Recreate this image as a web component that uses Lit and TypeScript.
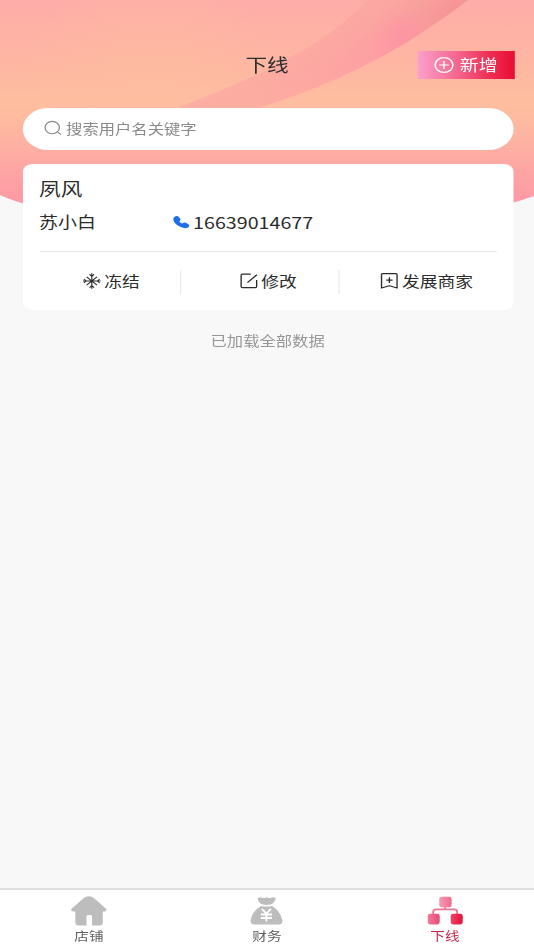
import { LitElement, html, css, svg } from "lit";
import { customElement, property } from "lit/decorators.js";

const icons: Record<string, unknown> = {
  add: svg`<circle cx="8" cy="8" r="7.4"/><path d="M8 4v8M4 8h8"/>`,
  search: svg`<circle cx="7.2" cy="7" r="6.6"/><path d="M12 11.8l3.4 2.8"/>`,
  snow: svg`<g stroke-width="1"><path d="M8 .2v15.6M.2 8h15.6M3.4 3.8l9.2 8.4M12.6 3.8l-9.2 8.4M6 1.4L8 3.4l2-2M6 14.6L8 12.6l2 2M1 6L3 8 1 10M15 6L13 8l2 2"/></g>`,
  edit: svg`<path d="M9.6 1.2H2.2Q1 1.2 1 2.4v11q0 1.2 1.2 1.2h11.4q1.2 0 1.2-1.2V7M6.6 9.6L15 1.8"/>`,
  bookmark: svg`<path d="M2 .7h11.8Q14.8 .7 14.8 1.8V15L8 12.8 1 15V1.8Q1 .7 2 .7zM8 4.2v5.8M5.2 7.1h5.6"/>`,
};

@customElement("line-icon")
class LineIcon extends LitElement {
  @property() name = "";
  static styles = css`
    :host { display: block; width: 16px; height: 16px; flex: none; }
    svg { display: block; width: 100%; height: 100%; overflow: visible; fill: none; stroke: currentColor; stroke-width: 1.2; stroke-linejoin: round; }
  `;
  render() {
    return html`<svg viewBox="0 0 16 16" preserveAspectRatio="none">${icons[this.name]}</svg>`;
  }
}

const tabs = [
  {
    label: "店铺",
    active: false,
    icon: svg`<path fill="#bdbdbd" d="M13 2Q15 .2 18 .2T23 2L35 12.4Q37 14.8 34 15.4H32V26Q32 29.4 29 29.4H21.3V20.5Q21.3 19 19.8 19H17.2Q15.7 19 15.7 20.5V29.4H7.5Q4.5 29.4 4.5 26V15.4H2Q-1 14.8 1 12.4Z"/>`,
  },
  {
    label: "财务",
    active: false,
    icon: svg`<path fill="#bdbdbd" d="M9.8 4.4Q8.4 1 12.4 1.2Q15 3 18.4 1.2Q21.4 3 24 1.2Q28.4 1 26.8 4.4Q25.4 6.6 23 8.3Q18 9.6 13.4 8.3Q11 6.8 9.8 4.4Z"/><path fill="#bdbdbd" d="M12.6 10Q18 11.2 23.6 10Q32 15 34 24.4Q34.4 28.6 30 28.6H6.4Q2 28.6 2.2 24.4Q4 15 12.6 10Z"/><path fill="none" stroke="#fff" stroke-width="1.8" d="M13.5 12.8L18 17.6L22.5 12.8M18 17.6V25.6M12.4 18.5H23.6M12.4 22H23.6"/>`,
  },
  {
    label: "下线",
    active: true,
    icon: svg`<path fill="none" stroke="#ec7391" stroke-width="1.8" d="M18 9V13.5M6 19V16Q6 13.4 9 13.4H27Q30 13.4 30 16V19"/><rect x="12" y=".7" width="12.4" height="10.6" rx="2.4" fill="url(#t)"/><rect x=".5" y="17.8" width="12" height="10.6" rx="2.4" fill="url(#l)"/><rect x="23.5" y="17.8" width="12" height="10.6" rx="2.4" fill="url(#r)"/>
      <defs><linearGradient id="t"><stop stop-color="#f59aba"/><stop offset="1" stop-color="#ef6c88"/></linearGradient><linearGradient id="l"><stop stop-color="#f17a9c"/><stop offset="1" stop-color="#e84a70"/></linearGradient><linearGradient id="r"><stop stop-color="#ed4468"/><stop offset="1" stop-color="#e31337"/></linearGradient></defs>`,
  },
];

const actions = [
  { icon: "snow", label: "冻结" },
  { icon: "edit", label: "修改" },
  { icon: "bookmark", label: "发展商家" },
];

@customElement("app-root")
class AppRoot extends LitElement {
  static styles = css`
    :host { display: block; width: 534px; height: 950px; overflow: hidden; background: #f8f8f8; }
    * { box-sizing: border-box; }
    .screen {
      width: 445px; height: 950px; transform: scaleX(1.2); transform-origin: 0 0;
      display: flex; flex-direction: column; position: relative;
      font-family: Roboto, "Noto Sans CJK SC", sans-serif; color: #2b2b2b; white-space: nowrap;
    }
    .backdrop { position: absolute; top: 0; left: 0; width: 445px; height: 240px; }
    .header, .search, .card, .end, .tabs { position: relative; }
    .header { height: 108px; padding: 22px 16px 0; display: grid; grid-template-columns: 1fr auto 1fr; align-items: center; }
    .title { grid-column: 2; font-size: 18px; line-height: 24px; padding-top: 1px; }
    .add {
      justify-self: end; width: 81px; height: 28px; display: flex; align-items: center; justify-content: center; gap: 5px;
      color: #fff; font-size: 15.8px; line-height: 28px; background: linear-gradient(90deg, #fba0cc, #f4688f 40%, #ef3158 72%, #e90c32);
    }
    .add line-icon { margin-top: -1px; }
    .add span { margin-top: 1px; }
    .search {
      margin: 0 17.3px 0 18.6px; height: 42px; flex: none; border-radius: 21px; background: #fff;
      display: flex; align-items: center; gap: 4px; padding: 0 18px 2px; font-size: 13.6px; color: #8a8a8a;
    }
    .search line-icon { width: 14.5px; height: 15px; }
    .card { margin: 13.5px 17.3px 0 18.6px; height: 146.5px; flex: none; background: #fff; border-radius: 8px; padding: 13px 14px 0; }
    .name { font-size: 18px; line-height: 26px; }
    .info { display: grid; grid-template-columns: 111.5px 1fr; align-items: center; height: 26px; margin-top: 6px; font-size: 15.8px; }
    .phone { display: flex; align-items: center; gap: 2.8px; font-family: "Noto Sans CJK SC", sans-serif; font-size: 16.4px; }
    .phone svg { width: 14px; height: 14px; }
    .actions { display: grid; grid-template-columns: 118px 132px 1fr; align-items: center; border-top: 1px solid #e8e8e8; margin-top: 16px; padding-top: 18px; }
    .action { display: flex; align-items: center; justify-content: center; gap: 3px; height: 24px; font-size: 14.8px; line-height: 24px; border-right: 1px solid #e9e9e9; }
    .action line-icon { width: 15px; margin-top: -1px; }
    .action:first-child { padding-left: 3px; }
    .action:nth-child(2) { padding-left: 15px; }
    .action:last-child { border: 0; padding-left: 15px; }
    .end { margin-top: 18.5px; padding-left: 1px; text-align: center; font-size: 13.6px; line-height: 24px; color: #969696; }
    .tabs { margin-top: auto; height: 62px; flex: none; background: #fff; border-top: 2px solid #dfdfdf; display: grid; grid-template-columns: repeat(3, 1fr); }
    .tab { display: flex; flex-direction: column; align-items: center; padding-top: 6px; gap: 1px; font-size: 12.2px; line-height: 20px; color: #606060; }
    .tab svg { width: 30px; height: 30px; flex: none; }
    .tab.active { color: #c52648; }
  `;

  render() {
    return html`<div class="screen">
      <svg class="backdrop" viewBox="0 0 534 240" preserveAspectRatio="none">
        <defs>
          <linearGradient id="sky" x1="0" y1="0" x2="0" y2="1">
            <stop stop-color="#feaca8"/><stop offset=".2" stop-color="#feb3a4"/><stop offset=".5" stop-color="#febe9f"/>
            <stop offset=".62" stop-color="#feb6a1"/><stop offset=".8" stop-color="#fda5a4"/><stop offset="1" stop-color="#fe95a6"/>
          </linearGradient>
          <linearGradient id="band" gradientUnits="userSpaceOnUse" x1="450" y1="0" x2="235" y2="110">
            <stop stop-color="#f3918f"/><stop offset=".18" stop-color="#f69a96"/><stop offset=".36" stop-color="#fd9fa2"/>
            <stop offset=".65" stop-color="#feaba2"/><stop offset="1" stop-color="#feb9a0"/>
          </linearGradient>
          <linearGradient id="fade" gradientUnits="userSpaceOnUse" x1="325" y1="20" x2="362" y2="82">
            <stop stop-color="#fdaca3" stop-opacity=".92"/><stop offset=".45" stop-color="#fba7a1" stop-opacity=".65"/><stop offset="1" stop-color="#ff98a6" stop-opacity="0"/>
          </linearGradient>
          <radialGradient id="glow" gradientUnits="userSpaceOnUse" cx="403" cy="38" r="34">
            <stop stop-color="#ff90a8" stop-opacity=".7"/><stop offset="1" stop-color="#ff99a6" stop-opacity="0"/>
          </radialGradient>
          <radialGradient id="warm" gradientUnits="userSpaceOnUse" cx="150" cy="85" r="130">
            <stop stop-color="#febd9f" stop-opacity=".6"/><stop offset="1" stop-color="#febd9f" stop-opacity="0"/>
          </radialGradient>
        </defs>
        <path fill="url(#sky)" d="M0 0H534V196Q505 207 460 213H75Q28 208 0 195Z"/>
        <rect width="330" height="150" fill="url(#warm)"/>
        <path fill="url(#band)" d="M368 0H468C415 40 355 78 256 109H175C250 80 320 50 368 0Z"/>
        <path fill="url(#fade)" d="M368 0H468C415 40 355 78 256 109H175C250 80 320 50 368 0Z"/>
        <path fill="url(#glow)" d="M368 0H468C415 40 355 78 256 109H175C250 80 320 50 368 0Z"/>
      </svg>
      <div class="header">
        <div class="title">下线</div>
        <div class="add"><line-icon name="add"></line-icon><span>新增</span></div>
      </div>
      <div class="search"><line-icon name="search"></line-icon>搜索用户名关键字</div>
      <div class="card">
        <div class="name">夙风</div>
        <div class="info">
          <span>苏小白</span>
          <span class="phone"><svg viewBox="0 0 16 16" preserveAspectRatio="none"><path fill="#1e6fe8" d="M.8 3Q2.6.2 5 1.4L7.2 4.2Q7.8 6 6.2 7.4Q7.2 9.2 9 9.8Q10.6 8.2 12.4 8.8L15.2 10.8Q16.6 12.6 14.4 14.4Q10.6 16.2 5.6 12.6Q-.6 8 .8 3Z"/></svg>16639014677</span>
        </div>
        <div class="actions">
          ${actions.map((a) => html`<div class="action"><line-icon name=${a.icon}></line-icon>${a.label}</div>`)}
        </div>
      </div>
      <div class="end">已加载全部数据</div>
      <div class="tabs">
        ${tabs.map((t) => html`<div class="tab ${t.active ? "active" : ""}"><svg viewBox="0 0 36 30" preserveAspectRatio="none">${t.icon}</svg>${t.label}</div>`)}
      </div>
    </div>`;
  }
}
